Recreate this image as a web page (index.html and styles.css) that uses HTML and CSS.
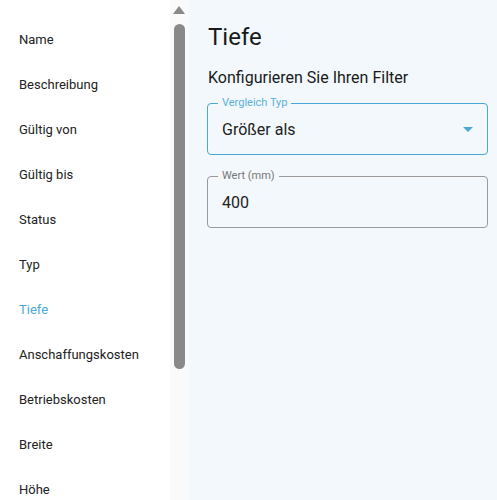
FILE: index.html
```html
<!DOCTYPE html>
<html lang="de">
<head>
<meta charset="utf-8">
<link rel="stylesheet" href="styles.css">
</head>
<body>
<div class="app">
  <aside class="sidebar">
    <nav class="nav">
      <div class="nav-item">Name</div>
      <div class="nav-item">Beschreibung</div>
      <div class="nav-item">Gültig von</div>
      <div class="nav-item">Gültig bis</div>
      <div class="nav-item">Status</div>
      <div class="nav-item">Typ</div>
      <div class="nav-item active">Tiefe</div>
      <div class="nav-item">Anschaffungskosten</div>
      <div class="nav-item">Betriebskosten</div>
      <div class="nav-item">Breite</div>
      <div class="nav-item">Höhe</div>
    </nav>
    <div class="scrollbar">
      <div class="scroll-arrow"></div>
      <div class="scroll-thumb"></div>
    </div>
  </aside>
  <main class="main">
    <h1 class="title">Tiefe</h1>
    <p class="subtitle">Konfigurieren Sie Ihren Filter</p>
    <div class="field focused">
      <span class="field-label">Vergleich Typ</span>
      <span class="field-value">Größer als</span>
      <span class="caret"></span>
    </div>
    <div class="field">
      <span class="field-label">Wert (mm)</span>
      <span class="field-value">400</span>
    </div>
  </main>
</div>
</body>
</html>
```
FILE: styles.css
```css
* { box-sizing: border-box; }
html, body { margin: 0; padding: 0; }
body {
  font-family: Roboto, "Noto Sans", "Liberation Sans", sans-serif;
  color: #212121;
}
.app {
  display: flex;
  height: 500px;
  overflow: hidden;
}
.sidebar {
  display: flex;
  width: 189px;
  flex: none;
  background: #fff;
}
.nav {
  width: 170px;
  padding-top: 18px;
}
.nav-item {
  height: 45px;
  line-height: 45px;
  padding-left: 19px;
  font-size: 13px;
  color: #222;
  margin-top: -1px;
  margin-bottom: 1px;
}
.nav-item.active { color: #4aa8d8; }
.scrollbar {
  width: 19px;
  background: #fafafa;
  display: flex;
  flex-direction: column;
  align-items: center;
  padding-top: 6px;
}
.scroll-arrow {
  width: 0; height: 0;
  border-left: 6px solid transparent;
  border-right: 6px solid transparent;
  border-bottom: 8px solid #8a8a8a;
  margin-left: -1px;
}
.scroll-thumb {
  margin-top: 10px;
  width: 11px;
  height: 345px;
  border-radius: 6px;
  background: #898989;
  margin-left: -1px;
}
.main {
  flex: 1;
  background: #f2f8fc;
  padding: 0 9px 0 18px;
}
.title {
  font-size: 24px;
  font-weight: 400;
  margin: 22px 0 0 1px;
  line-height: 30px;
  color: #1a1a1a;
}
.subtitle {
  font-size: 16px;
  margin: 16px 0 0 1px;
  line-height: 20px;
  color: #1a1a1a;
}
.field {
  position: relative;
  height: 52px;
  border: 1px solid #9a9a9a;
  border-radius: 4px;
  margin-top: 15px;
  display: flex;
  align-items: center;
  padding-left: 14px;
}
.field + .field { margin-top: 21px; }
.field.focused { border-color: #4aa8d8; }
.field-label {
  position: absolute;
  left: 10px;
  top: -8px;
  padding: 0 4px;
  font-size: 11px;
  line-height: 14px;
  color: #777;
  background: #f2f8fc;
}
.field.focused .field-label { color: #5ab0dd; }
.field-value {
  font-size: 16px;
  color: #222;
}
.caret {
  position: absolute;
  right: 14px;
  top: 23px;
  width: 0; height: 0;
  border-left: 5px solid transparent;
  border-right: 5px solid transparent;
  border-top: 5px solid #4aa8d8;
}
```
